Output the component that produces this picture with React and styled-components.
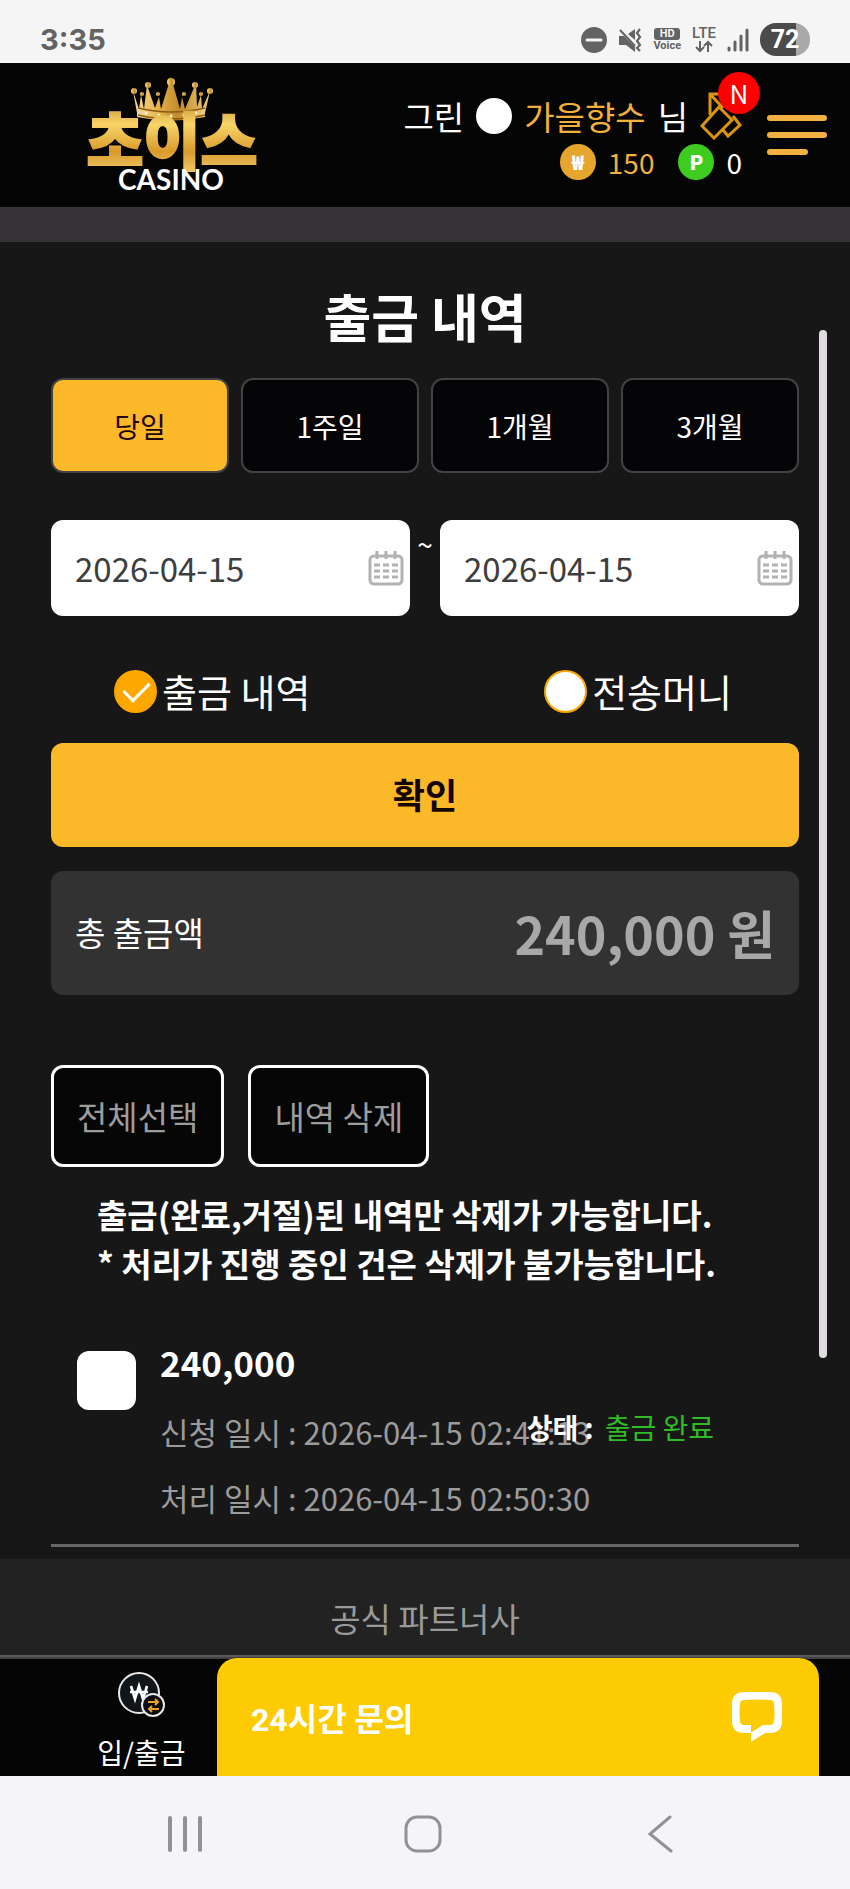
import React, { useState } from 'react'
import styled, { createGlobalStyle } from 'styled-components'

const GlobalStyle = createGlobalStyle`
  * {
    box-sizing: border-box;
  }
  body {
    margin: 0;
    background: #171717;
    color: #fff;
    font-family: 'Noto Sans CJK KR', 'Noto Sans', sans-serif;
  }
  button, input {
    margin: 0;
    font-family: inherit;
  }
  button {
    padding: 0;
    border: 0;
    background: none;
    color: inherit;
    cursor: pointer;
  }
  h1, p {
    margin: 0;
  }
  svg {
    display: block;
  }
`

/* ---------- status bar ---------- */

const StatusBar = styled.div`
  display: flex;
  align-items: center;
  justify-content: space-between;
  height: 63px;
  padding: 16px 40px 0;
  background: #f5f5f5;
  color: #636363;
  font-family: Roboto, sans-serif;
`

const Clock = styled.span`
  font-family: Inter, sans-serif;
  font-size: 29px;
  line-height: 32px;
  font-weight: 700;
`

const StatusIcons = styled.div`
  display: flex;
  align-items: center;
  gap: 11px;
`

const Stack = styled.div`
  display: flex;
  flex-direction: column;
  align-items: center;
  font-size: 11px;
  line-height: 12px;
  font-weight: 700;
`

const HdTag = styled.span`
  width: 26px;
  border-radius: 3px;
  background: #636363;
  color: #f5f5f5;
  text-align: center;
`

const Lte = styled.span`
  font-size: 15px;
  line-height: 13px;
  font-weight: 500;
`

const Battery = styled.div`
  width: 50px;
  border-radius: 16px;
  background: linear-gradient(to right, #4b4b4b 72%, #a9a9a9 72%);
  color: #fff;
  font-size: 25px;
  line-height: 33px;
  font-weight: 700;
  text-align: center;
`

/* ---------- header ---------- */

const Header = styled.header`
  display: flex;
  align-items: center;
  height: 144px;
  padding: 0 23px 0 80px;
  background: #050505;
`

const UserBox = styled.div`
  margin-left: auto;
  padding-top: 8px;
`

const UserRow = styled.div`
  display: flex;
  align-items: center;
  justify-content: flex-end;
  gap: 12px;
  height: 46px;
  font-size: ${(p) => (p.$small ? '28px' : '33px')};
`

const Gold = styled.span`
  color: #f1b13c;
`

const Level = styled.span`
  width: 36px;
  height: 36px;
  border-radius: 50%;
  background: #fff;
`

const Coin = styled.span`
  width: 36px;
  height: 36px;
  margin-left: ${(p) => (p.$spaced ? '12px' : '0')};
  border-radius: 50%;
  background: ${(p) => p.$color};
  font-size: 20px;
  line-height: 36px;
  font-weight: 900;
  text-align: center;
`

const NoteButton = styled.button`
  position: relative;
`

const NewBadge = styled.span`
  position: absolute;
  top: -20px;
  left: 18px;
  width: 42px;
  height: 42px;
  border-radius: 50%;
  background: #fe0000;
  font-size: 26px;
  line-height: 42px;
`

const MenuButton = styled.button`
  display: flex;
  flex-direction: column;
  gap: 11px;
  width: 60px;
  margin-left: 25px;
  span {
    height: 6px;
    border-radius: 3px;
    background: #f0b042;
  }
  span:last-child {
    width: 41px;
  }
`

const Band = styled.div`
  height: 35px;
  background: #353335;
`

/* ---------- content ---------- */

const Main = styled.main`
  position: relative;
  padding: 36px 51px 12px;
  background: #181718;
`

const ScrollThumb = styled.div`
  position: absolute;
  top: 88px;
  right: 23px;
  bottom: 201px;
  width: 8px;
  border-radius: 4px;
  background: #dfdbe0;
`

const Title = styled.h1`
  font-size: 52px;
  line-height: 76px;
  font-weight: 700;
  text-align: center;
`

const Periods = styled.div`
  display: grid;
  grid-template-columns: repeat(4, 1fr);
  gap: 12px;
  margin-top: 24px;
`

const PeriodButton = styled.button`
  height: 95px;
  border: 2px solid #434144;
  border-radius: 12px;
  background: ${(p) => (p.$active ? '#fbb829' : '#050406')};
  color: ${(p) => (p.$active ? '#200500' : '#fff')};
  font-size: 28px;
`

const Dates = styled.div`
  display: flex;
  margin-top: 47px;
`

const Tilde = styled.span`
  width: 30px;
  font-size: 28px;
  line-height: 48px;
  text-align: center;
`

const DateField = styled.label`
  flex: 1;
  display: flex;
  align-items: center;
  min-width: 0;
  height: 96px;
  padding: 0 6px 0 24px;
  border-radius: 12px;
  background: #fff;
  input {
    flex: 1;
    min-width: 0;
    padding: 0;
    border: 0;
    outline: 0;
    background: none;
    color: #3e3e3e;
    font-size: 33px;
  }
`

const Kinds = styled.div`
  display: flex;
  justify-content: space-between;
  margin-top: 50px;
  padding: 0 67px 0 63px;
`

const Kind = styled.label`
  display: flex;
  align-items: center;
  gap: 5px;
  font-size: 38px;
  line-height: 50px;
`

const Radio = styled.input`
  appearance: none;
  width: 43px;
  height: 43px;
  border: 2px solid #f9a602;
  border-radius: 50%;
  background: #fff;
  &:checked {
    background: #fda800;
  }
  &:checked::after {
    content: '';
    display: block;
    width: 22px;
    height: 12px;
    margin: 11px 0 0 8px;
    border: solid #fff;
    border-width: 0 0 3px 3px;
    transform: translateY(-2px) rotate(-45deg);
  }
`

const ConfirmButton = styled.button`
  display: block;
  width: 100%;
  height: 104px;
  margin-top: 27px;
  padding-bottom: 4px;
  border-radius: 12px;
  background: #fbb829;
  color: #140500;
  font-size: 35px;
  font-weight: 700;
`

const Total = styled.div`
  display: flex;
  align-items: center;
  justify-content: space-between;
  height: 124px;
  margin-top: 24px;
  padding: 0 24px 2px;
  border-radius: 12px;
  background: #323232;
  font-size: 33px;
  strong {
    color: #a8a8a8;
    font-size: 52px;
    font-weight: 700;
  }
`

const Actions = styled.div`
  display: flex;
  gap: 24px;
  margin-top: 70px;
`

const ActionButton = styled.button`
  height: 102px;
  padding: 0 23px;
  border: 3px solid #fff;
  border-radius: 12px;
  background: #060606;
  color: #9d9d9d;
  font-size: 33px;
`

const Notice = styled.p`
  margin-top: 23px;
  padding: 0 46px;
  font-size: 33px;
  line-height: 49px;
  font-weight: 700;
`

const Item = styled.article`
  position: relative;
  display: flex;
  margin-top: 49px;
  padding: 0 0 13px 26px;
  border-bottom: 3px solid #666;
`

const Check = styled.input`
  appearance: none;
  width: 59px;
  height: 59px;
  margin-top: 14px;
  border-radius: 12px;
  background: #fff;
  &:checked {
    background: #fbb829;
  }
`

const ItemBody = styled.div`
  margin-left: 24px;
  color: #9b9b9b;
  font-size: 31px;
  line-height: 66px;
  strong {
    display: block;
    margin-bottom: 12px;
    color: #fff;
    font-size: 35px;
    line-height: 50px;
  }
`

/* sits over the end of the request time */
const ItemState = styled.p`
  position: absolute;
  top: 65px;
  right: 85px;
  display: flex;
  gap: 11px;
  font-size: 28px;
  line-height: 50px;
  span {
    color: #30bb27;
  }
`

const Partners = styled.footer`
  height: 98px;
  border-bottom: 2px solid #5a585a;
  background: #222;
  color: #9a9a9a;
  font-size: 33px;
  line-height: 118px;
  text-align: center;
`

/* ---------- bottom ---------- */

const BottomBar = styled.div`
  display: flex;
  height: 119px;
  padding-right: 31px;
  border-top: 2px solid #434143;
  background: #050505;
`

const CashLink = styled.a`
  display: flex;
  flex-direction: column;
  align-items: center;
  width: 217px;
  padding: 13px 0 0 66px;
  color: #fff;
  font-size: 28px;
  line-height: 42px;
  text-decoration: none;
  svg {
    margin-bottom: 14px;
  }
`

const ChatButton = styled.button`
  flex: 1;
  display: flex;
  align-items: center;
  justify-content: space-between;
  margin-top: -1px;
  padding: 0 37px 0 34px;
  border-radius: 20px 20px 0 0;
  background: #fdcb02;
  font-family: Roboto, 'Noto Sans CJK KR', sans-serif;
  font-size: 32px;
  font-weight: 700;
`

const NavBar = styled.nav`
  display: flex;
  align-items: center;
  height: 113px;
  padding: 2px 71px 0 66px;
  background: #f5f4f9;
  button {
    flex: 1;
    display: flex;
    justify-content: center;
  }
`

const Logo = () => (
  <svg width="182" height="124" viewBox="0 0 182 124" role="img" aria-label="초이스 CASINO">
    <defs>
      <linearGradient id="gold" x1="0" y1="0" x2="0" y2="1">
        <stop offset="0" stopColor="#b97f22" />
        <stop offset="0.35" stopColor="#f8d568" />
        <stop offset="0.65" stopColor="#d99a2b" />
        <stop offset="1" stopColor="#fbe08a" />
      </linearGradient>
      <linearGradient id="crown" x1="0" y1="0" x2="1" y2="0">
        <stop offset="0" stopColor="#f3d9a0" />
        <stop offset="0.3" stopColor="#e9b64c" />
        <stop offset="0.6" stopColor="#c08a2a" />
        <stop offset="1" stopColor="#f1cf7d" />
      </linearGradient>
    </defs>
    <g fill="url(#crown)">
      <path d="M53 18l4 22q34 9 68 0l5-22-8 18-1-14-4 12-1-24-11 26-3-12-2 12-9-32-10 32-2-12-4 11-8-23-3 24-3-14-2 14z" />
      <path d="M57 35q34 8 68 0v9q-34 7-68 0z" />
      <circle cx="54" cy="18" r="3" />
      <circle cx="62" cy="21" r="2" />
      <circle cx="68" cy="12" r="3" />
      <circle cx="78" cy="21" r="2" />
      <circle cx="91" cy="9" r="4" />
      <circle cx="104" cy="21" r="2" />
      <circle cx="115" cy="12" r="3" />
      <circle cx="121" cy="21" r="2" />
      <circle cx="130" cy="18" r="3" />
    </g>
    <path d="M58 35q34 8 67 0M58 42q33 8 67 0" fill="none" stroke="#8a5a14" strokeWidth="1.5" />
    <g fill="#fff3c8">
      <circle cx="66" cy="40" r="1.5" />
      <circle cx="79" cy="42" r="1.5" />
      <circle cx="91" cy="43" r="1.5" />
      <circle cx="104" cy="42" r="1.5" />
      <circle cx="116" cy="40" r="1.5" />
    </g>
    <text
      x="92"
      y="92"
      textAnchor="middle"
      fontFamily="'Noto Sans CJK KR', sans-serif"
      fontSize="62"
      fontWeight="900"
      fill="url(#gold)"
      stroke="url(#gold)"
      strokeWidth="2"
    >
      초이스
    </text>
    <text
      x="91"
      y="117"
      textAnchor="middle"
      fontFamily="Lato, sans-serif"
      fontSize="28"
      fontWeight="700"
      fill="#fff"
    >
      CASINO
    </text>
  </svg>
)

const DndIcon = () => (
  <svg width="26" height="26" viewBox="0 0 26 26">
    <circle cx="13" cy="13" r="13" fill="#636363" />
    <path d="M6 13h14" stroke="#f5f5f5" strokeWidth="3" strokeLinecap="round" />
  </svg>
)

const MuteIcon = () => (
  <svg width="24" height="24" viewBox="0 0 24 24">
    <path d="M1 8h5l11 11v5l-9-7H1zM10 6l7-5v11z" fill="#636363" />
    <path d="M2 2l15 16" stroke="#636363" strokeWidth="2" />
    <path d="M22 1l-3 4 3 4-3 4 3 4-3 3 3 3" fill="none" stroke="#636363" strokeWidth="2.2" />
  </svg>
)

const ArrowsIcon = () => (
  <svg width="20" height="13" viewBox="0 0 20 13" fill="none" stroke="#636363" strokeWidth="2">
    <path d="M6 1v10M2 7l4 4 4-4M14 12V2M10 6l4-4 4 4" />
  </svg>
)

const SignalIcon = () => (
  <svg width="22" height="24" viewBox="0 0 22 24" stroke="#636363" strokeWidth="3" strokeLinecap="round">
    <path d="M2 20v2M8 14v8M14 8v14M20 2v20" />
  </svg>
)

const NoteIcon = () => (
  <svg width="42" height="48" viewBox="0 0 42 48" fill="none" stroke="#dc940e" strokeWidth="3">
    <path d="M22 2H10v21M10 2l13 14" />
    <path d="M2 34l17-19 13 13-18 18z" />
    <path d="M23 38l5 6 12-11-7-9" />
  </svg>
)

const CalendarIcon = () => (
  <svg width="36" height="36" viewBox="0 0 36 36" fill="none" stroke="#b2b2b2">
    <rect x="2" y="6" width="32" height="28" rx="4" strokeWidth="3" />
    <path d="M9 1v8M18 1v8M27 1v8" strokeWidth="3" />
    <path d="M6 15h24M6 21h24M6 27h24" strokeWidth="3" strokeDasharray="6 3" />
  </svg>
)

const CashIcon = () => (
  <svg width="47" height="45" viewBox="0 0 47 45" fill="none">
    <circle cx="21" cy="21" r="20" fill="#11161b" stroke="#e8e8e8" strokeWidth="2" />
    <path d="M13 14l4 13 4-13 4 13 4-13M12 20h18" stroke="#fff" strokeWidth="2.6" />
    <circle cx="35" cy="33" r="11" fill="#0a0a0a" stroke="#e8e8e8" strokeWidth="2" />
    <path d="M30 30h10m-3-3l3 3-3 3M41 37H31m3-3l-3 3 3 3" stroke="#e9a02d" strokeWidth="2" />
  </svg>
)

const ChatIcon = () => (
  <svg width="50" height="50" viewBox="0 0 50 50">
    <path
      d="M12 4q13-1 26 0 8 0 8 8 1 10 0 17 0 8-8 8H12q-8 0-8-8-1-8 0-17 0-8 8-8z"
      fill="none"
      stroke="#fff"
      strokeWidth="8"
    />
    <path d="M19 33h12l-12 8z" fill="#fdcb02" />
    <path d="M19 41v9l14-9h5v-8h-7l-12 8z" fill="#fff" />
  </svg>
)

const periods = ['당일', '1주일', '1개월', '3개월']
const kinds = ['출금 내역', '전송머니']

export default function App() {
  const [period, setPeriod] = useState('당일')
  const [kind, setKind] = useState('출금 내역')
  const [from, setFrom] = useState('2026-04-15')
  const [to, setTo] = useState('2026-04-15')
  const [checked, setChecked] = useState(false)

  return (
    <>
      <GlobalStyle />
      <StatusBar>
        <Clock>3:35</Clock>
        <StatusIcons>
          <DndIcon />
          <MuteIcon />
          <Stack>
            <HdTag>HD</HdTag>
            <span>Voice</span>
          </Stack>
          <Stack>
            <Lte>LTE</Lte>
            <ArrowsIcon />
          </Stack>
          <SignalIcon />
          <Battery>72</Battery>
        </StatusIcons>
      </StatusBar>

      <Header>
        <Logo />
        <UserBox>
          <UserRow>
            <span>그린</span>
            <Level />
            <Gold>가을향수</Gold>
            <span>님</span>
            <NoteButton type="button" aria-label="쪽지">
              <NoteIcon />
              <NewBadge>N</NewBadge>
            </NoteButton>
          </UserRow>
          <UserRow $small>
            <Coin $color="#e6a52c">₩</Coin>
            <Gold>150</Gold>
            <Coin $color="#3dcc1f" $spaced>P</Coin>
            <span>0</span>
          </UserRow>
        </UserBox>
        <MenuButton type="button" aria-label="메뉴">
          <span />
          <span />
          <span />
        </MenuButton>
      </Header>
      <Band />

      <Main>
        <Title>출금 내역</Title>
        <Periods>
          {periods.map((item) => (
            <PeriodButton key={item} type="button" $active={item === period} onClick={() => setPeriod(item)}>
              {item}
            </PeriodButton>
          ))}
        </Periods>
        <Dates>
          <DateField>
            <input type="text" aria-label="시작일" value={from} onChange={(e) => setFrom(e.target.value)} />
            <CalendarIcon />
          </DateField>
          <Tilde>~</Tilde>
          <DateField>
            <input type="text" aria-label="종료일" value={to} onChange={(e) => setTo(e.target.value)} />
            <CalendarIcon />
          </DateField>
        </Dates>
        <Kinds>
          {kinds.map((item) => (
            <Kind key={item}>
              <Radio type="radio" name="kind" checked={item === kind} onChange={() => setKind(item)} />
              {item}
            </Kind>
          ))}
        </Kinds>
        <ConfirmButton type="button">확인</ConfirmButton>
        <Total>
          <span>총 출금액</span>
          <strong>240,000 원</strong>
        </Total>
        <Actions>
          <ActionButton type="button" onClick={() => setChecked(true)}>전체선택</ActionButton>
          <ActionButton type="button">내역 삭제</ActionButton>
        </Actions>
        <Notice>
          출금(완료,거절)된 내역만 삭제가 가능합니다.
          <br />* 처리가 진행 중인 건은 삭제가 불가능합니다.
        </Notice>
        <Item>
          <Check
            type="checkbox"
            aria-label="240,000"
            checked={checked}
            onChange={(e) => setChecked(e.target.checked)}
          />
          <ItemBody>
            <strong>240,000</strong>
            <p>신청 일시 : 2026-04-15 02:41:13</p>
            <p>처리 일시 : 2026-04-15 02:50:30</p>
          </ItemBody>
          <ItemState>
            <b>상태 :</b>
            <span>출금 완료</span>
          </ItemState>
        </Item>
        <ScrollThumb />
      </Main>
      <Partners>공식 파트너사</Partners>

      <BottomBar>
        <CashLink href="#cash">
          <CashIcon />
          입/출금
        </CashLink>
        <ChatButton type="button">
          24시간 문의
          <ChatIcon />
        </ChatButton>
      </BottomBar>
      <NavBar>
        <button type="button" aria-label="최근 앱">
          <svg width="34" height="36" viewBox="0 0 34 36" stroke="#919196" strokeWidth="4" strokeLinecap="round">
            <path d="M2 2v32M17 2v32M32 2v32" />
          </svg>
        </button>
        <button type="button" aria-label="홈">
          <svg width="38" height="38" viewBox="0 0 38 38" fill="none" stroke="#919196" strokeWidth="3">
            <rect x="2" y="2" width="34" height="34" rx="11" />
          </svg>
        </button>
        <button type="button" aria-label="뒤로">
          <svg width="26" height="38" viewBox="0 0 26 38" fill="none" stroke="#919196" strokeWidth="3" strokeLinecap="round">
            <path d="M23 2L3 19l21 17" />
          </svg>
        </button>
      </NavBar>
    </>
  )
}
